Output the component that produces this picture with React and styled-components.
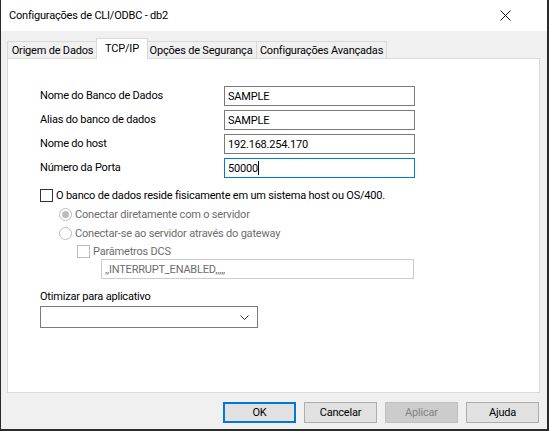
import React from 'react';
import styled, { createGlobalStyle } from 'styled-components';

const GlobalStyle = createGlobalStyle`
    html, body {
        margin: 0;
        padding: 0;
        background: #1e1e1e;
    }
    body {
        font-family: Roboto, "Liberation Sans", sans-serif;
        font-size: 11px;
        letter-spacing: -0.2px;
        color: #000;
    }
`;

const Window = styled.div`
    width: 546px;
    height: 429px;
    border-left: 1px solid #2a2a2a;
    border-right: 2px solid #2a2a2a;
    border-bottom: 2px solid #2a2a2a;
    background: #f0f0f0;
    display: flex;
    flex-direction: column;
`;

const TitleBar = styled.div`
    height: 31px;
    background: #fff;
    display: flex;
    align-items: center;
    justify-content: space-between;
    padding: 0 36px 0 8px;
    font-size: 11px;
`;

const Body = styled.div`
    flex: 1;
    padding: 7px 7px 0 6px;
    display: flex;
    flex-direction: column;
`;

const TabRow = styled.div`
    display: flex;
    align-items: flex-end;
    height: 21px;
    margin-bottom: -1px;
    position: relative;
    z-index: 1;
`;

const Tab = styled.div`
    box-sizing: border-box;
    height: ${p => (p.$active ? '21px' : '18px')};
    margin: ${p => (p.$active ? '0 -2px' : '0')};
    border: 1px solid #d9d9d9;
    border-bottom: ${p => (p.$active ? 'none' : '1px solid #d9d9d9')};
    border-left: ${p => (p.$left || p.$active ? '1px solid #d9d9d9' : 'none')};
    background: ${p => (p.$active ? '#fff' : '#f0f0f0')};
    display: flex;
    align-items: center;
    justify-content: center;
    width: ${p => p.$w}px;
    padding-bottom: ${p => (p.$active ? '2px' : '0')};
    white-space: nowrap;
    position: relative;
    z-index: ${p => (p.$active ? 2 : 0)};
`;

const Panel = styled.div`
    box-sizing: border-box;
    width: 533px;
    height: 335px;
    background: #fff;
    border: 1px solid #d9d9d9;
    padding: 27px 0 0 32px;
    display: flex;
    flex-direction: column;
`;

const FieldGrid = styled.div`
    display: grid;
    grid-template-columns: 184px 191px;
    row-gap: 4px;
    align-items: center;
`;

const Label = styled.div`
    line-height: ${p => p.$lh || 20}px;
    white-space: nowrap;
    color: ${p => (p.$disabled ? '#6d6d6d' : '#000')};
`;

const TextBox = styled.div`
    box-sizing: border-box;
    height: 20px;
    width: ${p => p.$w || 191}px;
    margin-left: ${p => p.$indent || 0}px;
    border: 1px solid ${p => (p.$focused ? '#0078d7' : p.$disabled ? '#cccccc' : '#7a7a7a')};
    background: #fff;
    padding-left: 3px;
    display: flex;
    align-items: center;
    white-space: nowrap;
    color: ${p => (p.$disabled ? '#6d6d6d' : '#000')};
`;

const Caret = styled.span`
    display: inline-block;
    width: 1px;
    height: 14px;
    background: #000;
`;

const OptionRow = styled.div`
    display: flex;
    align-items: center;
    height: ${p => p.$h || 19}px;
    margin-top: ${p => p.$top || 0}px;
    margin-left: ${p => p.$indent || 0}px;
    gap: 3px;
    white-space: nowrap;
    color: ${p => (p.$disabled ? '#6d6d6d' : '#000')};
`;

const CheckBox = styled.span`
    box-sizing: border-box;
    width: 13px;
    height: 13px;
    border: 1px solid ${p => (p.$disabled ? '#bcbcbc' : '#333')};
    background: #fff;
    flex: none;
`;

const Radio = styled.span`
    box-sizing: border-box;
    width: 13px;
    height: 13px;
    border-radius: 50%;
    border: 1px solid #bcbcbc;
    background: #fff;
    flex: none;
    display: flex;
    align-items: center;
    justify-content: center;
    &::after {
        content: '';
        display: ${p => (p.$checked ? 'block' : 'none')};
        width: 7px;
        height: 7px;
        border-radius: 50%;
        background: #bcbcbc;
    }
`;

const Select = styled.div`
    box-sizing: border-box;
    width: 218px;
    height: 22px;
    border: 1px solid #7a7a7a;
    background: #fff;
    display: flex;
    align-items: center;
    justify-content: flex-end;
    padding-right: 8px;
`;

const Footer = styled.div`
    display: flex;
    justify-content: flex-end;
    gap: 8px;
    padding: 9px 1px 0 0;
`;

const Button = styled.div`
    box-sizing: border-box;
    width: 73px;
    height: 21px;
    display: flex;
    align-items: center;
    justify-content: center;
    background: ${p => (p.$disabled ? '#cccccc' : '#e1e1e1')};
    border: ${p => (p.$default ? '2px solid #0078d7' : p.$disabled ? '1px solid #bfbfbf' : '1px solid #adadad')};
    color: ${p => (p.$disabled ? '#838383' : '#000')};
`;

const fields = [
    ['Nome do Banco de Dados', 'SAMPLE'],
    ['Alias do banco de dados', 'SAMPLE'],
    ['Nome do host', '192.168.254.170'],
];

export default function App() {
    return (
        <Window>
            <GlobalStyle />
            <TitleBar>
                <span>Configurações de CLI/ODBC - db2</span>
                <svg width="11" height="11" viewBox="0 0 11 11">
                    <path d="M0.5 0.5 L10.5 10.5 M10.5 0.5 L0.5 10.5" stroke="#111" strokeWidth="1" />
                </svg>
            </TitleBar>
            <Body>
                <TabRow>
                    <Tab $left $w={91}>Origem de Dados</Tab>
                    <Tab $active $w={52}>TCP/IP</Tab>
                    <Tab $w={111}>Opções de Segurança</Tab>
                    <Tab $w={130}>Configurações Avançadas</Tab>
                </TabRow>
                <Panel>
                    <FieldGrid>
                        {fields.map(([label, value]) => (
                            <React.Fragment key={label}>
                                <Label>{label}</Label>
                                <TextBox>{value}</TextBox>
                            </React.Fragment>
                        ))}
                        <Label>Número da Porta</Label>
                        <TextBox $focused>50000<Caret /></TextBox>
                    </FieldGrid>
                    <OptionRow $top={8}>
                        <CheckBox />
                        <span>O banco de dados reside fisicamente em um sistema host ou OS/400.</span>
                    </OptionRow>
                    <OptionRow $disabled $indent={19}>
                        <Radio $checked />
                        <span>Conectar diretamente com o servidor</span>
                    </OptionRow>
                    <OptionRow $disabled $indent={19}>
                        <Radio />
                        <span>Conectar-se ao servidor através do gateway</span>
                    </OptionRow>
                    <OptionRow $disabled $indent={37} $h={16}>
                        <CheckBox $disabled />
                        <span>Parâmetros DCS</span>
                    </OptionRow>
                    <TextBox $disabled $w={313} $indent={61}>,,INTERRUPT_ENABLED,,,,,</TextBox>
                    <Label $lh={18} style={{ marginTop: 9 }}>Otimizar para aplicativo</Label>
                    <Select>
                        <svg width="9" height="5" viewBox="0 0 9 5">
                            <path d="M0.5 0.5 L4.5 4.5 L8.5 0.5" fill="none" stroke="#333" strokeWidth="1" />
                        </svg>
                    </Select>
                </Panel>
                <Footer>
                    <Button $default>OK</Button>
                    <Button>Cancelar</Button>
                    <Button $disabled>Aplicar</Button>
                    <Button>Ajuda</Button>
                </Footer>
            </Body>
        </Window>
    );
}
